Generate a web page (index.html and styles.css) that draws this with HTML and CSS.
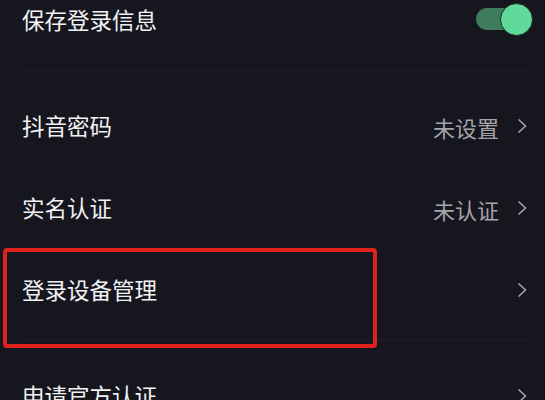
FILE: index.html
```html
<!DOCTYPE html>
<html lang="zh-CN">
<head>
<meta charset="utf-8">
<title>账号与安全</title>
<link rel="stylesheet" href="styles.css">
</head>
<body>
<main class="list">
  <section class="group">
    <div class="row">
      <span class="label">保存登录信息</span>
      <span class="toggle"><span class="track"></span><span class="knob"></span></span>
    </div>
  </section>
  <section class="group">
    <div class="row">
      <span class="label">抖音密码</span>
      <span class="meta"><span class="value">未设置</span><svg class="chev" viewBox="0 0 10 16" width="10" height="16"><polyline points="1.5,1.5 8.5,8 1.5,14.5"/></svg></span>
    </div>
    <div class="row">
      <span class="label">实名认证</span>
      <span class="meta"><span class="value">未认证</span><svg class="chev" viewBox="0 0 10 16" width="10" height="16"><polyline points="1.5,1.5 8.5,8 1.5,14.5"/></svg></span>
    </div>
    <div class="row">
      <span class="label">登录设备管理</span>
      <span class="meta"><svg class="chev" viewBox="0 0 10 16" width="10" height="16"><polyline points="1.5,1.5 8.5,8 1.5,14.5"/></svg></span>
    </div>
  </section>
  <section class="group">
    <div class="row">
      <span class="label">申请官方认证</span>
      <span class="meta"><svg class="chev" viewBox="0 0 10 16" width="10" height="16"><polyline points="1.5,1.5 8.5,8 1.5,14.5"/></svg></span>
    </div>
  </section>
</main>
<div class="highlight"></div>
</body>
</html>
```
FILE: styles.css
```css
html, body {
  margin: 0;
  padding: 0;
  width: 545px;
  height: 400px;
  overflow: hidden;
  background: #16161f;
}
body {
  position: relative;
  font-family: "Noto Sans CJK SC", "Noto Sans", sans-serif;
  color: #f2f2f4;
}
.list {
  margin-top: -35px;
  display: flex;
  flex-direction: column;
}
.group {
  padding: 15px 0 8px;
  margin-left: 22px;
  margin-right: 17px;
  border-bottom: 1px solid #202029;
}
.row {
  height: 82px;
  display: flex;
  align-items: center;
  justify-content: space-between;
  padding-right: 1px;
}
.label {
  font-size: 22.5px;
  line-height: 1;
  margin-top: -3px;
}
.meta {
  display: flex;
  align-items: center;
  gap: 18px;
}
.value {
  font-size: 22px;
  line-height: 1;
  margin-top: -1px;
  color: #a4a4aa;
}
.chev {
  display: block;
  margin-top: -3px;
}
.chev polyline {
  fill: none;
  stroke: #a8a8ae;
  stroke-width: 1.5;
}
.toggle {
  position: relative;
  width: 57px;
  height: 32px;
  margin-right: -6px;
  margin-top: -5px;
}
.track {
  position: absolute;
  left: 0;
  top: 5px;
  width: 48px;
  height: 22px;
  border-radius: 11px;
  background: #3f7c5d;
}
.knob {
  position: absolute;
  right: 0;
  top: 0;
  width: 31px;
  height: 31px;
  border-radius: 50%;
  background: #60d99b;
  border: 1px solid #17291f;
}
.highlight {
  position: absolute;
  left: 3px;
  top: 248px;
  width: 366px;
  height: 92px;
  border: 4px solid #e1211c;
  border-radius: 4px;
}
```
